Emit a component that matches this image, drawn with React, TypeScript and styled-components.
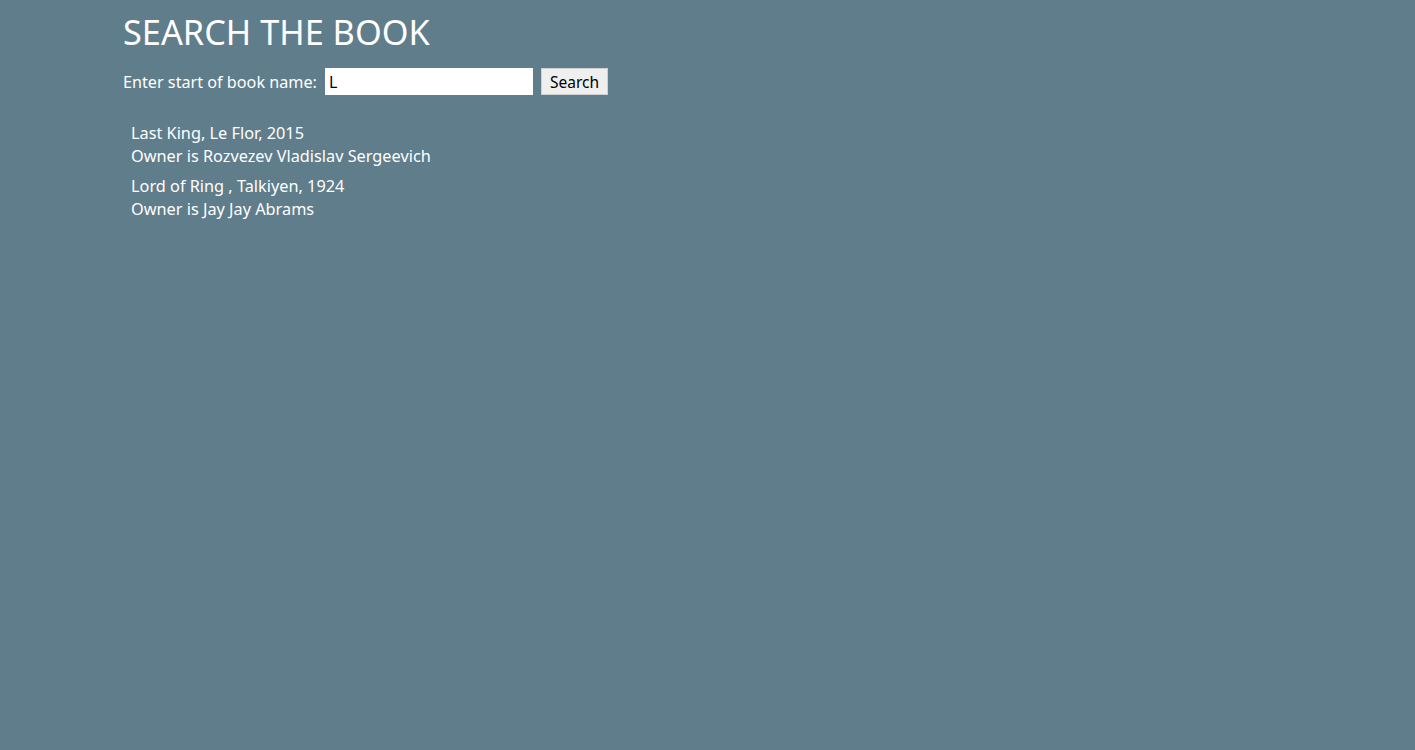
import React, { useState } from "react";
import styled, { createGlobalStyle } from "styled-components";

const GlobalStyle = createGlobalStyle`
  html, body {
    margin: 0;
    padding: 0;
    background-color: #607d8b;
    min-height: 100%;
  }
  body {
    font-family: "Noto Sans", "Open Sans", sans-serif;
    color: #ffffff;
  }
`;

const Page = styled.div`
  min-height: 750px;
  padding: 0 123px;
`;

const Title = styled.h1`
  margin: 0;
  padding-top: 10px;
  font-size: 34.3px;
  font-weight: 400;
  line-height: 44px;
`;

const SearchForm = styled.form`
  display: flex;
  align-items: center;
  margin-top: 14px;
  font-size: 16.2px;
`;

const Label = styled.label`
  margin-right: 8px;
`;

const Input = styled.input`
  box-sizing: border-box;
  width: 208px;
  height: 27px;
  border: none;
  padding: 0 4px;
  font-family: "Noto Sans", sans-serif;
  font-size: 16px;
  color: #000;
  outline: none;
`;

const Button = styled.button`
  box-sizing: border-box;
  margin-left: 8px;
  height: 27px;
  padding: 0 8px;
  border: 1px solid #d0d0d0;
  background: #efefef;
  font-family: "Noto Sans", sans-serif;
  font-size: 15.5px;
  color: #000;
  cursor: pointer;
`;

const List = styled.ul`
  list-style: none;
  margin: 27px 0 0 8px;
  padding: 0;
  display: flex;
  flex-direction: column;
  gap: 7px;
`;

const Item = styled.li`
  font-size: 16.3px;
  line-height: 23px;
`;

interface Book {
  name: string;
  author: string;
  year: number;
  owner: string;
}

const books: Book[] = [
  { name: "Last King", author: "Le Flor", year: 2015, owner: "Rozvezev Vladislav Sergeevich" },
  { name: "Lord of Ring ", author: "Talkiyen", year: 1924, owner: "Jay Jay Abrams" },
];

const App: React.FC = () => {
  const [query, setQuery] = useState("L");

  return (
    <Page>
      <GlobalStyle />
      <Title>SEARCH THE BOOK</Title>
      <SearchForm onSubmit={(e) => e.preventDefault()}>
        <Label htmlFor="book">Enter start of book name:</Label>
        <Input id="book" value={query} onChange={(e) => setQuery(e.target.value)} />
        <Button type="submit">Search</Button>
      </SearchForm>
      <List>
        {books.map((b) => (
          <Item key={b.name}>
            <div>
              {b.name}, {b.author}, {b.year}
            </div>
            <div>Owner is {b.owner}</div>
          </Item>
        ))}
      </List>
    </Page>
  );
};

export default App;
